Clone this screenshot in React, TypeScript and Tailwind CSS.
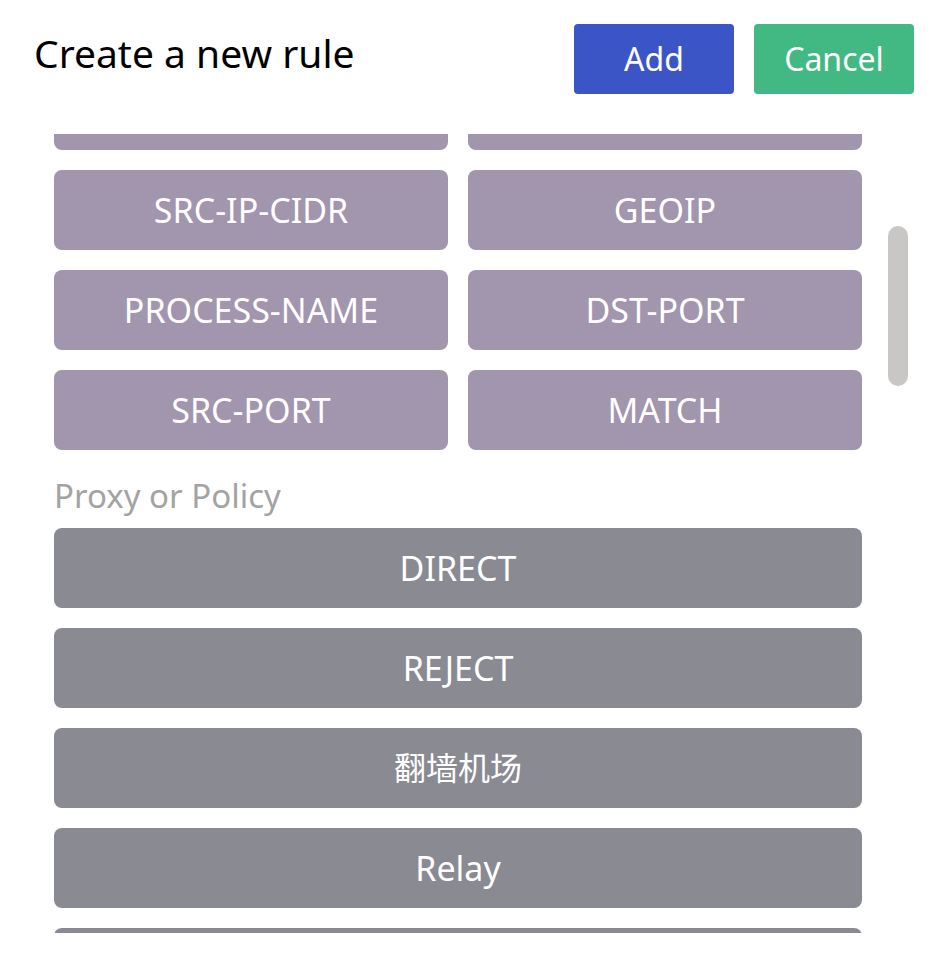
import React from "react";

const ruleTypes = [
  "DOMAIN-KEYWORD",
  "IP-CIDR",
  "SRC-IP-CIDR",
  "GEOIP",
  "PROCESS-NAME",
  "DST-PORT",
  "SRC-PORT",
  "MATCH",
];

const policies = ["DIRECT", "REJECT", "翻墙机场", "Relay", "Proxy"];

export default function App() {
  return (
    <div
      className="w-[935px] h-[969px] bg-white overflow-hidden"
      style={{ fontFamily: '"Noto Sans", "Noto Sans CJK SC", sans-serif' }}
    >
      <div className="flex items-start justify-between pl-[34px] pr-[21px] pt-[24px]">
        <h1 className="text-[39px] leading-[60px] text-black mt-[-1px] whitespace-nowrap">Create a new rule</h1>
        <div className="flex gap-[20px]">
          <button className="w-[160px] h-[70px] rounded-[4px] bg-[#3b55c6] text-white text-[32px]">
            Add
          </button>
          <button className="w-[160px] h-[70px] rounded-[4px] bg-[#42b883] text-white text-[32px]">
            Cancel
          </button>
        </div>
      </div>
      <div className="flex mt-[40px] h-[799px] overflow-hidden pl-[54px]">
        <div className="w-[808px] flex flex-col mt-[-64px]">
          <div className="grid grid-cols-2 gap-[20px]">
            {ruleTypes.map((t) => (
              <button
                key={t}
                className="h-[80px] rounded-[8px] bg-[#a295ae] text-white text-[34px] flex items-center justify-center whitespace-nowrap"
              >
                {t}
              </button>
            ))}
          </div>
          <div className="text-[#a3a3a3] text-[33px] leading-[40px] mt-[26px] mb-[12px] whitespace-nowrap">
            Proxy or Policy
          </div>
          <div className="flex flex-col gap-[20px]">
            {policies.map((p) => (
              <button
                key={p}
                className={
                  p === "翻墙机场"
                    ? "h-[80px] rounded-[8px] bg-[#8a8a93] text-white text-[32px] flex items-center justify-center whitespace-nowrap"
                    : "h-[80px] rounded-[8px] bg-[#8a8a93] text-white text-[34px] flex items-center justify-center whitespace-nowrap"
                }
              >
                {p}
              </button>
            ))}
          </div>
        </div>
        <div className="ml-[26px] w-[20px] pt-[92px]">
          <div className="w-[20px] h-[160px] rounded-full bg-[#c8c7c5]" />
        </div>
      </div>
    </div>
  );
}
